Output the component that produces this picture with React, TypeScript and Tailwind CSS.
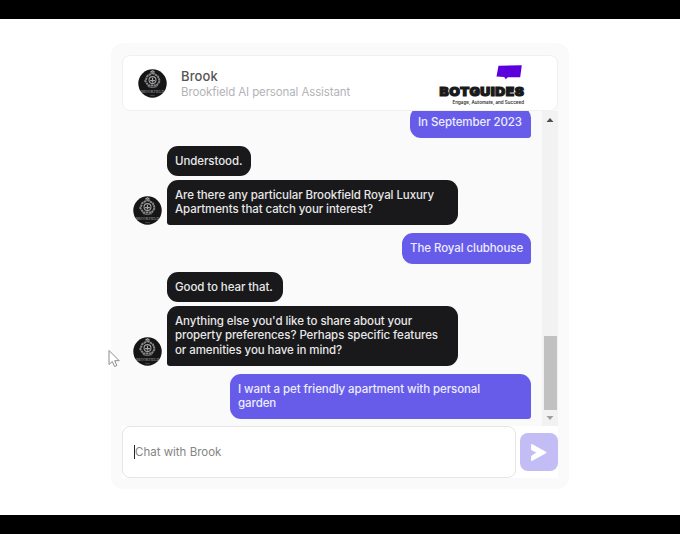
import { useState } from "react";
import clsx from "clsx";

type Message = {
  from: "bot" | "user";
  lines: string[];
  className: string;
  avatar?: boolean;
};

const messages: Message[] = [
  { from: "user", lines: ["In September 2023"], className: "h-[31px] w-[121px]" },
  { from: "bot", lines: ["Understood."], className: "mt-2 h-[30px] w-[84px]" },
  {
    from: "bot",
    lines: ["Are there any particular Brookfield Royal Luxury", "Apartments that catch your interest?"],
    className: "mt-1 h-[45px] w-[291px] rounded-bl-[3px]",
    avatar: true,
  },
  { from: "user", lines: ["The Royal clubhouse"], className: "mt-2 h-[31px] w-[129px]" },
  { from: "bot", lines: ["Good to hear that."], className: "mt-2 h-[30px] w-[116px]" },
  {
    from: "bot",
    lines: [
      "Anything else you'd like to share about your",
      "property preferences? Perhaps specific features",
      "or amenities you have in mind?",
    ],
    className: "mt-1 h-[60px] w-[291px] rounded-bl-[3px]",
    avatar: true,
  },
  {
    from: "user",
    lines: ["I want a pet friendly apartment with personal", "garden"],
    className: "mt-2 h-[45px] w-[301px]",
  },
];

function Avatar() {
  return (
    <svg viewBox="0 0 30 30" className="size-[29px] shrink-0 overflow-visible">
      <circle cx="15" cy="15" r="14.7" fill="#151516" />
      <g fill="none" stroke="#a3a3a5">
        <path
          d="M15 4l5.500 3.500 2 5-3.200 4.500h-8.600L7.500 12.500l2-5z"
          stroke="#858587"
          strokeWidth="2"
          strokeDasharray="2.500 .5"
        />
        <circle cx="15" cy="11.500" r="3.600" strokeWidth="1.1" />
        <path d="M12.800 3.300l2.200-1.500 2.200 1.500M15 9v5M12.500 12h5" strokeWidth="1.2" />
        <path d="M10.500 18.300q4.500 1.800 9 0" strokeWidth="1" stroke="#7c7c7e" />
      </g>
      <text
        x="3"
        y="25"
        textLength="24"
        lengthAdjust="spacingAndGlyphs"
        fontFamily="Liberation Serif, serif"
        fontSize="5"
        fill="#a8a8aa"
      >
        BROOKFIELD
      </text>
      <path d="M12.500 27.500h5" stroke="#5c5c5e" strokeWidth=".7" />
    </svg>
  );
}

function Logo() {
  return (
    <svg viewBox="0 0 90 42" className="h-[42px] w-[90px] shrink-0 overflow-visible">
      <path d="M61.500 1.800L84.800 1.300 83.200 13.300 70.800 13.300 68.800 15.200 67.200 13.100 59.500 12.500z" fill="#5b00dc" />
      <text
        x="2.500"
        y="31.500"
        textLength="85"
        lengthAdjust="spacingAndGlyphs"
        fontFamily="Inter, sans-serif"
        fontSize="12"
        fontWeight="900"
        letterSpacing=".5"
        fill="#191919"
        stroke="#191919"
        strokeWidth="1.1"
      >
        BOTGUIDES
      </text>
      <text
        x="15.500"
        y="39.700"
        textLength="71.500"
        lengthAdjust="spacingAndGlyphs"
        fontFamily="Inter, sans-serif"
        fontSize="4.500"
        fontWeight="600"
        fill="#333"
      >
        Engage, Automate, and Succeed
      </text>
    </svg>
  );
}

function Bubble({ from, lines, className, avatar }: Message) {
  const isUser = from === "user";

  return (
    <div className={clsx("flex shrink-0 items-end", isUser ? "justify-end" : "justify-start")}>
      {!isUser && <div className="w-[34px]">{avatar && <Avatar />}</div>}
      <div
        className={clsx(
          "flex flex-col rounded-[11px] px-2 pt-2 text-[11.500px] leading-[14.400px] font-medium tracking-[-0.080px] whitespace-nowrap",
          isUser ? "rounded-br-[3px] bg-[#665ce9] text-[#edecff]" : "bg-[#19191b] text-[#e8e8e8]",
          className,
        )}
      >
        {lines.map((line) => (
          <span key={line}>{line}</span>
        ))}
      </div>
    </div>
  );
}

export default function App() {
  const [draft, setDraft] = useState("");

  return (
    <div className="relative flex h-[534px] w-[680px] flex-col overflow-hidden bg-white font-['Inter',sans-serif]">
      <div className="h-[19px] shrink-0 bg-black" />

      <main className="flex flex-1 justify-center pt-6">
        <section className="flex h-[446px] w-[458px] flex-col rounded-xl bg-[#fafafa] px-[11px] pt-3">
          {/* Header */}
          <header className="flex h-[56px] shrink-0 items-center rounded-lg border border-[#f0f0f0] bg-white pl-[15px]">
            <Avatar />
            <div className="ml-[14px] flex-1 pt-[2px]">
              <h1 className="text-[13px] leading-4 font-medium tracking-[0.100px] text-[#555]">Brook</h1>
              <p className="text-[11.500px] leading-4 tracking-[-0.120px] text-[#b3b3b7]">Brookfield AI personal Assistant</p>
            </div>
            <div className="mr-[30px] pt-[3px]">
              <Logo />
            </div>
          </header>

          {/* Messages */}
          <div className="flex h-[315px] shrink-0">
            <div className="flex flex-1 flex-col justify-end overflow-hidden pr-[11px] pb-[7px] pl-[11px]">
              {messages.map((message) => (
                <Bubble key={message.lines[0]} {...message} />
              ))}
            </div>
            <div className="flex w-4 flex-col items-center bg-[#f2f2f2]">
              <svg viewBox="0 0 16 16" className="size-4 shrink-0">
                <path d="M4.500 11L8 7l3.500 4z" fill="#505050" />
              </svg>
              <div className="mt-[209px] h-[74px] w-[13px] bg-[#c1c1c1]" />
              <svg viewBox="0 0 16 16" className="size-4 shrink-0">
                <path d="M4.500 6L8 10l3.500-4z" fill="#a0a0a0" />
              </svg>
            </div>
          </div>

          {/* Composer */}
          <form className="flex h-[52px] shrink-0 items-center gap-1 bg-white" onSubmit={(e) => e.preventDefault()}>
            <div className="flex h-[52px] w-[394px] items-center rounded-lg border border-[#e6e6e6] bg-white pl-[11px]">
              <span className="h-[14px] w-px bg-[#222]" />
              <input
                value={draft}
                onChange={(e) => setDraft(e.target.value)}
                placeholder="Chat with Brook"
                className="w-full pt-[2px] text-[11.500px] text-[#444] outline-none placeholder:text-[#858585]"
              />
            </div>
            <button type="submit" aria-label="Send" className="size-[38px] rounded-lg bg-[#c3bdf5]">
              <svg viewBox="0 0 38 38" className="size-[38px]">
                <path
                  d="M12 12L25.500 19.500 12 27V23.500L18 19.500 12 16.500z"
                  fill="#fff"
                  stroke="#fff"
                  strokeWidth="1.800"
                  strokeLinejoin="round"
                />
              </svg>
            </button>
          </form>
        </section>
      </main>

      <div className="h-[19px] shrink-0 bg-black" />

      {/* Mouse pointer */}
      <svg viewBox="0 0 14 20" className="absolute top-[349px] left-[107px] h-5 w-[14px]">
        <path
          d="M2 1.500v14l3.300-3 2.300 5 2.300-1-2.200-4.800h4.500z"
          fill="#fff"
          stroke="#8b8b8b"
          strokeWidth="1"
          strokeLinejoin="round"
        />
      </svg>
    </div>
  );
}
